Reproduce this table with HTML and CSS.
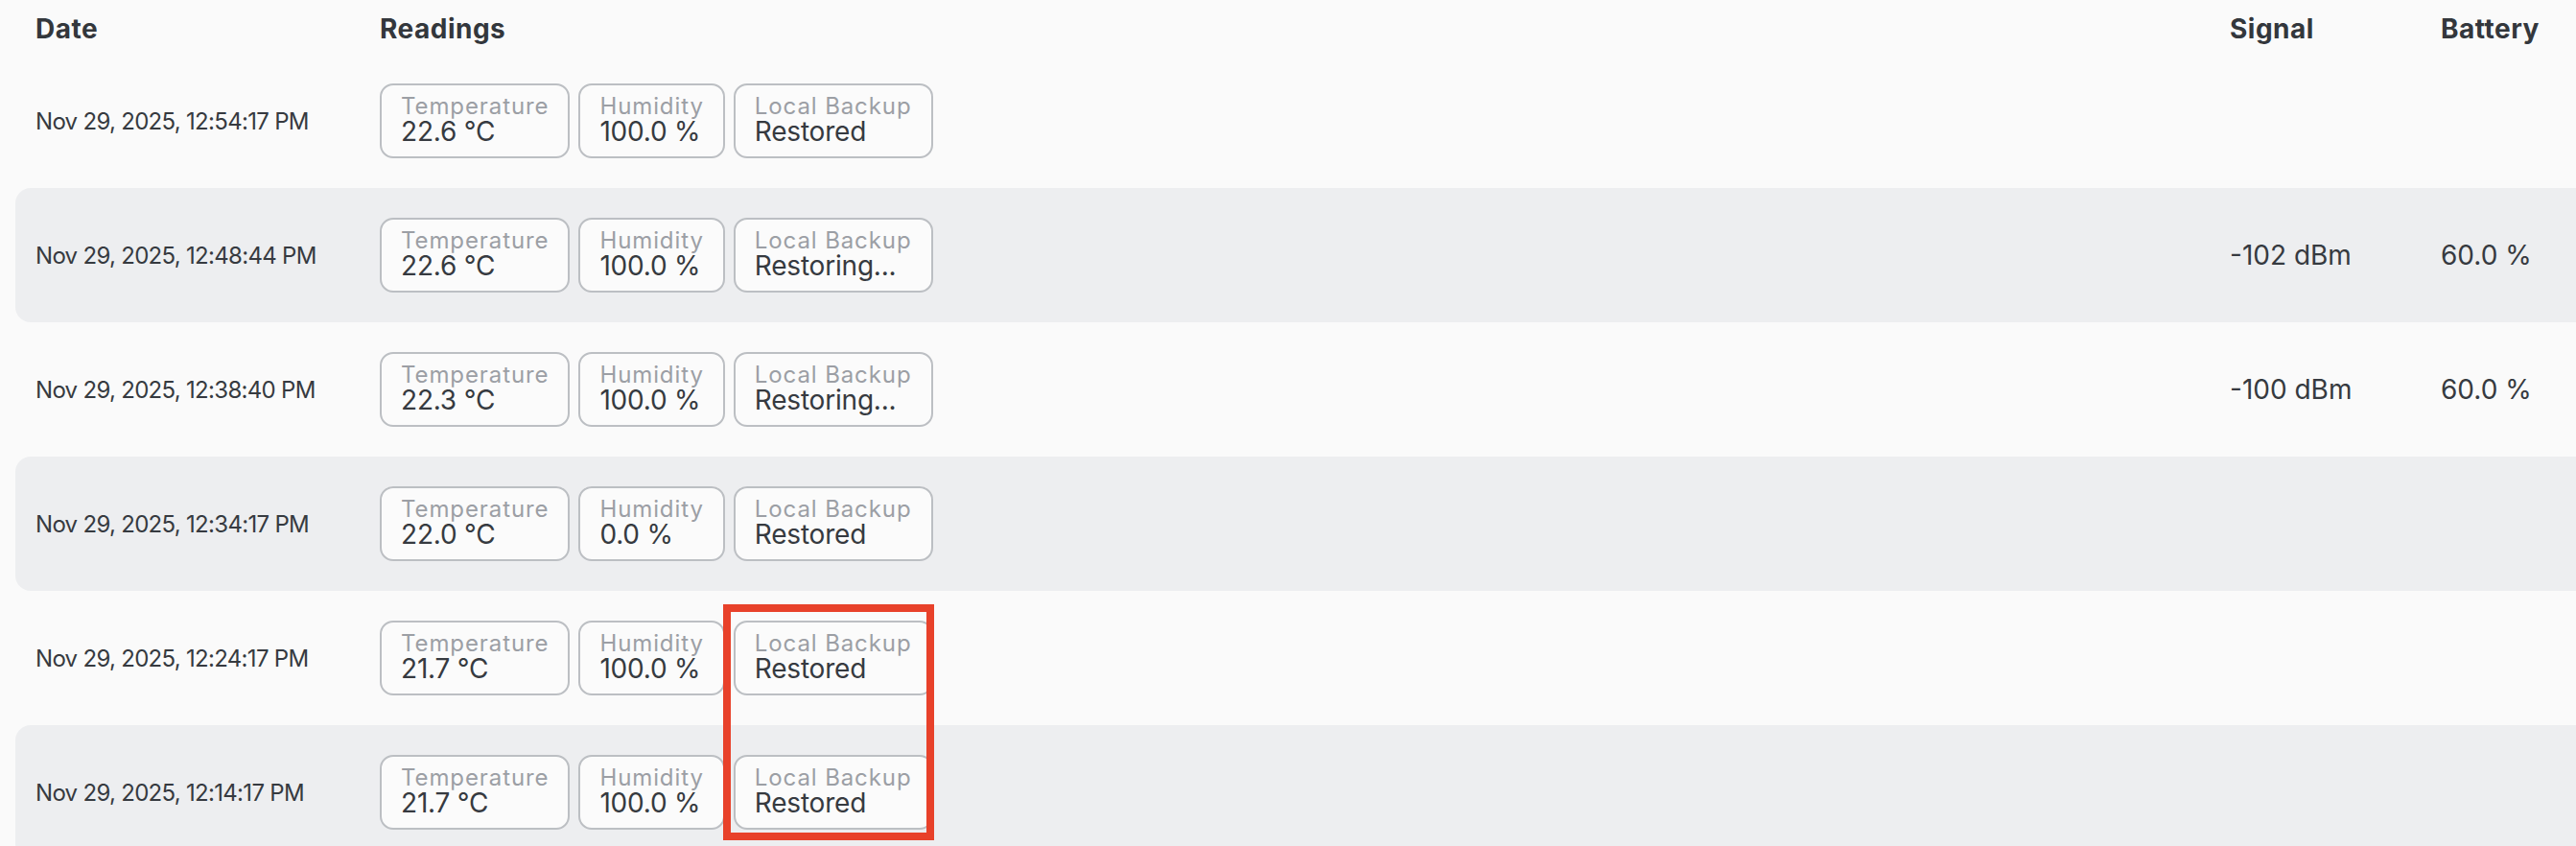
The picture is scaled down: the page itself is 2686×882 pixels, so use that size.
FILE: index.html
```html
<!DOCTYPE html>
<html lang="en">
<head>
<meta charset="utf-8">
<title>Readings</title>
<link rel="stylesheet" href="styles.css">
</head>
<body>
<div class="table">
  <div class="row head">
    <div class="cell">Date</div>
    <div class="cell">Readings</div>
    <div class="cell">Signal</div>
    <div class="cell">Battery</div>
  </div>
  <div class="row">
    <div class="cell date">Nov 29, 2025, 12:54:17 PM</div>
    <div class="cell chips">
      <div class="chip"><span class="lbl">Temperature</span><span class="val">22.6 °C</span></div>
      <div class="chip"><span class="lbl">Humidity</span><span class="val">100.0 %</span></div>
      <div class="chip"><span class="lbl">Local Backup</span><span class="val">Restored</span></div>
    </div>
    <div class="cell num"></div>
    <div class="cell num"></div>
  </div>
  <div class="row alt">
    <div class="cell date">Nov 29, 2025, 12:48:44 PM</div>
    <div class="cell chips">
      <div class="chip"><span class="lbl">Temperature</span><span class="val">22.6 °C</span></div>
      <div class="chip"><span class="lbl">Humidity</span><span class="val">100.0 %</span></div>
      <div class="chip"><span class="lbl">Local Backup</span><span class="val">Restoring...</span></div>
    </div>
    <div class="cell num">-102 dBm</div>
    <div class="cell num">60.0 %</div>
  </div>
  <div class="row">
    <div class="cell date">Nov 29, 2025, 12:38:40 PM</div>
    <div class="cell chips">
      <div class="chip"><span class="lbl">Temperature</span><span class="val">22.3 °C</span></div>
      <div class="chip"><span class="lbl">Humidity</span><span class="val">100.0 %</span></div>
      <div class="chip"><span class="lbl">Local Backup</span><span class="val">Restoring...</span></div>
    </div>
    <div class="cell num">-100 dBm</div>
    <div class="cell num">60.0 %</div>
  </div>
  <div class="row alt">
    <div class="cell date">Nov 29, 2025, 12:34:17 PM</div>
    <div class="cell chips">
      <div class="chip"><span class="lbl">Temperature</span><span class="val">22.0 °C</span></div>
      <div class="chip"><span class="lbl">Humidity</span><span class="val">0.0 %</span></div>
      <div class="chip"><span class="lbl">Local Backup</span><span class="val">Restored</span></div>
    </div>
    <div class="cell num"></div>
    <div class="cell num"></div>
  </div>
  <div class="row">
    <div class="cell date">Nov 29, 2025, 12:24:17 PM</div>
    <div class="cell chips">
      <div class="chip"><span class="lbl">Temperature</span><span class="val">21.7 °C</span></div>
      <div class="chip"><span class="lbl">Humidity</span><span class="val">100.0 %</span></div>
      <div class="chip"><span class="lbl">Local Backup</span><span class="val">Restored</span></div>
    </div>
    <div class="cell num"></div>
    <div class="cell num"></div>
  </div>
  <div class="row alt">
    <div class="cell date">Nov 29, 2025, 12:14:17 PM</div>
    <div class="cell chips">
      <div class="chip"><span class="lbl">Temperature</span><span class="val">21.7 °C</span></div>
      <div class="chip"><span class="lbl">Humidity</span><span class="val">100.0 %</span></div>
      <div class="chip"><span class="lbl">Local Backup</span><span class="val">Restored</span></div>
    </div>
    <div class="cell num"></div>
    <div class="cell num"></div>
  </div>
  <div class="highlight"></div>
</div>
</body>
</html>
```
FILE: styles.css
```css
html, body {
  margin: 0;
  padding: 0;
  background: #fafafa;
  overflow: hidden;
}
body {
  font-family: Inter, "Open Sans", sans-serif;
  color: #363a40;
}
.table {
  position: relative;
  padding-left: 16px;
}
.row {
  display: grid;
  grid-template-columns: 359px 1fr 220px 162px;
  align-items: center;
  height: 140px;
}
.row.head {
  height: 56px;
  align-items: start;
}
.row.alt {
  background: #edeef0;
  border-radius: 16px 0 0 16px;
}
.cell {
  padding-left: 21px;
}
.head .cell {
  font-weight: 700;
  font-size: 28px;
  line-height: 34px;
  padding-top: 13px;
  letter-spacing: 0.5px;
  color: #33373c;
}
.date {
  font-size: 24px;
  letter-spacing: -0.7px;
}
.num {
  font-size: 28px;
}
.chips {
  display: flex;
  gap: 9px;
}
.chip {
  display: flex;
  flex-direction: column;
  border: 2px solid #bcbfc3;
  border-radius: 14px;
  background: #fbfbfb;
  padding: 10px 20px 12px 20px;
}
.lbl {
  font-size: 24px;
  line-height: 24px;
  letter-spacing: 0.9px;
  color: #9c9fa5;
}
.val {
  font-size: 28px;
  line-height: 28px;
  letter-spacing: -0.2px;
  color: #363a40;
}
.highlight {
  position: absolute;
  left: 754px;
  top: 630px;
  width: 220px;
  height: 246px;
  box-sizing: border-box;
  border: 8px solid #e8412a;
}
```
